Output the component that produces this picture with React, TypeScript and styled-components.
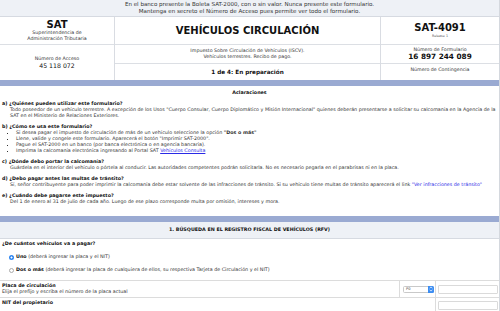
import styled, { createGlobalStyle } from 'styled-components';

const GlobalStyle = createGlobalStyle`
  html, body {
    margin: 0;
    padding: 0;
    background: #fff;
  }
  body {
    font-family: "DejaVu Sans", Verdana, sans-serif;
    color: #2b2b2b;
    width: 500px;
    height: 311px;
    overflow: hidden;
  }
`;

const Page = styled.div`
  width: 499px;
  min-height: 311px;
  border-right: 1px solid #d4d8de;
  font-size: 4.8px;
  line-height: 6px;
`;

const Notice = styled.div`
  height: 17px;
  padding-top: 1px;
  box-sizing: border-box;
  background: #eef1f6;
  border-bottom: 1px solid #d6dae1;
  text-align: center;
  font-size: 5.55px;
  line-height: 7px;
  color: #333;
`;

const Header = styled.div`
  display: grid;
  grid-template-columns: 115px 266px 1fr;
  height: 63px;
`;

const Column = styled.div<{ $last?: boolean }>`
  display: flex;
  flex-direction: column;
  border-right: ${(p) => (p.$last ? 'none' : '1px solid #d9dce2')};
`;

const TitleCell = styled.div`
  height: 28px;
  flex: none;
  box-sizing: border-box;
  border-bottom: 1px solid #dcdfe4;
  display: flex;
  flex-direction: column;
  align-items: center;
  justify-content: center;
  text-align: center;
`;

const InfoCell = styled.div<{ $grow?: boolean; $top?: boolean }>`
  height: ${(p) => (p.$grow ? 'auto' : '19px')};
  flex: ${(p) => (p.$grow ? '1' : 'none')};
  box-sizing: border-box;
  border-bottom: ${(p) => (p.$grow ? 'none' : '1px solid #dcdfe4')};
  display: flex;
  flex-direction: column;
  align-items: center;
  justify-content: ${(p) => (p.$top ? 'flex-start' : 'center')};
  padding-top: ${(p) => (p.$top ? '3px' : '0')};
  text-align: center;
`;

const BigTitle = styled.div<{ $size?: number }>`
  font-size: ${(p) => p.$size ?? 10}px;
  line-height: 11px;
  font-weight: bold;
  color: #111;
`;

const Tiny = styled.div`
  font-size: 4.75px;
  line-height: 6px;
  color: #333;
`;

const Release = styled.div`
  font-size: 3.3px;
  line-height: 6px;
  color: #555;
`;

const Digits = styled.div<{ $size: number; $bold?: boolean }>`
  font-size: ${(p) => p.$size}px;
  line-height: 8px;
  font-weight: ${(p) => (p.$bold ? 'bold' : 'normal')};
  color: #111;
`;

const Step = styled.div`
  font-size: 5.7px;
  font-weight: bold;
  color: #111;
`;

const BlueBar = styled.div`
  height: 6px;
  background: #9aaad2;
`;

const SubHeading = styled.div`
  height: 14px;
  display: flex;
  align-items: center;
  justify-content: center;
  font-weight: bold;
  color: #111;
`;

const Faq = styled.div`
  padding: 0 2px 11px;
`;

const FaqItem = styled.div`
  margin-top: 5px;
  &:first-child {
    margin-top: 1px;
  }
`;

const Question = styled.div`
  font-weight: bold;
  color: #111;
`;

const Answer = styled.div`
  padding-left: 8px;
  color: #333;
`;

const Bullets = styled.ul`
  margin: 0;
  padding-left: 14px;
  list-style: square;
  color: #333;
  li::marker {
    font-size: 4px;
  }
`;

const Link = styled.span<{ $underline?: boolean }>`
  color: #2a2ae6;
  text-decoration: ${(p) => (p.$underline ? 'underline' : 'none')};
`;

const SectionTitle = styled.div`
  height: 17px;
  box-sizing: border-box;
  background: #eef1f6;
  border-bottom: 1px solid #d6dae1;
  display: flex;
  align-items: center;
  justify-content: center;
  font-weight: bold;
  color: #111;
`;

const Choice = styled.div`
  padding: 2px 2px 7px;
  border-bottom: 1px solid #dcdcdc;
`;

const Option = styled.div`
  display: flex;
  align-items: center;
  gap: 2px;
  margin-top: 7px;
  padding-left: 7px;
  color: #333;
  b {
    color: #111;
  }
`;

const Radio = styled.span<{ $checked?: boolean }>`
  width: 5px;
  height: 5px;
  border-radius: 50%;
  box-sizing: border-box;
  flex: none;
  background: ${(p) => (p.$checked ? 'radial-gradient(circle, #fff 0 0.9px, #2f86f0 1.1px)' : '#fff')};
  border: ${(p) => (p.$checked ? 'none' : '0.6px solid #aaa')};
`;

const FieldRow = styled.div`
  display: flex;
  border-bottom: 1px solid #dcdcdc;
  min-height: 15px;
`;

const FieldLabel = styled.div`
  flex: 1;
  padding: 2px 2px;
`;

const Hint = styled.div`
  color: #333;
`;

const FieldCell = styled.div<{ $w: number; $end?: boolean }>`
  width: ${(p) => p.$w}px;
  flex: none;
  box-sizing: border-box;
  border-left: 1px solid #dcdcdc;
  display: flex;
  align-items: center;
  justify-content: ${(p) => (p.$end ? 'flex-end' : 'center')};
  padding-right: ${(p) => (p.$end ? '1px' : '0')};
`;

const FakeSelect = styled.div`
  width: 31px;
  height: 7px;
  box-sizing: border-box;
  border: 0.6px solid #c9c9c9;
  border-radius: 1.5px;
  display: flex;
  align-items: center;
  justify-content: space-between;
  font-size: 3.6px;
  color: #444;
  padding-left: 2px;
  background: #fff;
`;

const SelectArrows = styled.span`
  width: 6px;
  height: 7px;
  margin-right: -0.6px;
  border-radius: 0 1.5px 1.5px 0;
  background: #3c8df2;
  display: flex;
  align-items: center;
  justify-content: center;
`;

const TextInput = styled.input`
  width: 60px;
  height: 9px;
  box-sizing: border-box;
  border: 1px solid #dadada;
  border-radius: 1px;
  padding: 0;
  outline: none;
`;

type FaqEntry = { q: string; a?: React.ReactNode; list?: React.ReactNode[] };

const getFaqs = (): FaqEntry[] => [
  {
    q: 'a) ¿Quiénes pueden utilizar este formulario?',
    a: <>Todo poseedor de un vehículo terrestre. A excepción de los Usos "Cuerpo Consular, Cuerpo Diplomático y Misión Internacional" quienes deberán presentarse a solicitar su calcomanía en la Agencia de la SAT en el Ministerio de Relaciones Exteriores.</>,
  },
  {
    q: 'b) ¿Cómo se usa este formulario?',
    list: [
      <>Si desea pagar el impuesto de circulación de más de un vehículo seleccione la opción <b>"Dos o más"</b></>,
      <>Llene, valide y congele este formulario. Aparecerá el botón "Imprimir SAT-2000".</>,
      <>Pague el SAT-2000 en un banco (por banca electrónica o en agencia bancaria).</>,
      <>Imprima la calcomanía electrónica ingresando al Portal SAT <Link $underline>Vehículos Consulta</Link></>,
    ],
  },
  {
    q: 'c) ¿Dónde debo portar la calcomanía?',
    a: <>Guárdela en el interior del vehículo o pórtela al conducir. Las autoridades competentes podrán solicitarla. No es necesario pegarla en el parabrisas ni en la placa.</>,
  },
  {
    q: 'd) ¿Debo pagar antes las multas de tránsito?',
    a: <>Sí, señor contribuyente para poder imprimir la calcomanía debe estar solvente de las infracciones de tránsito. Si su vehículo tiene multas de tránsito aparecerá el link <Link>"Ver infracciones de tránsito"</Link></>,
  },
  {
    q: 'e) ¿Cuándo debe pagarse este impuesto?',
    a: <>Del 1 de enero al 31 de julio de cada año. Luego de ese plazo corresponde multa por omisión, intereses y mora.</>,
  },
];

export default function App() {
  const faqs = getFaqs();
  return (
    <Page>
      <GlobalStyle />
      <Notice>
        En el banco presente la Boleta SAT-2000, con o sin valor. Nunca presente este formulario.
        <br />
        Mantenga en secreto el Número de Acceso pues permite ver todo el formulario.
      </Notice>

      <Header>
        <Column>
          <TitleCell>
            <BigTitle>SAT</BigTitle>
            <Tiny>Superintendencia de<br />Administración Tributaria</Tiny>
          </TitleCell>
          <InfoCell $grow>
            <Tiny>Número de Acceso</Tiny>
            <Digits $size={6.2}>45 118 072</Digits>
          </InfoCell>
        </Column>
        <Column>
          <TitleCell>
            <BigTitle $size={10}>VEHÍCULOS CIRCULACIÓN</BigTitle>
          </TitleCell>
          <InfoCell>
            <Tiny>Impuesto Sobre Circulación de Vehículos (ISCV).<br />Vehículos terrestres. Recibo de pago.</Tiny>
          </InfoCell>
          <InfoCell $grow>
            <Step>1 de 4: En preparación</Step>
          </InfoCell>
        </Column>
        <Column $last>
          <TitleCell>
            <BigTitle>SAT-4091</BigTitle>
            <Release>Release 1</Release>
          </TitleCell>
          <InfoCell>
            <Tiny>Número de Formulario</Tiny>
            <Digits $size={7.3} $bold>16 897 244 089</Digits>
          </InfoCell>
          <InfoCell $grow $top>
            <Tiny>Número de Contingencia</Tiny>
          </InfoCell>
        </Column>
      </Header>

      <BlueBar />
      <SubHeading>Aclaraciones</SubHeading>

      <Faq>
        {faqs.map((f) => (
          <FaqItem key={f.q}>
            <Question>{f.q}</Question>
            {f.a && <Answer>{f.a}</Answer>}
            {f.list && (
              <Bullets>
                {f.list.map((li, i) => (
                  <li key={i}>{li}</li>
                ))}
              </Bullets>
            )}
          </FaqItem>
        ))}
      </Faq>

      <BlueBar />
      <SectionTitle>1. BÚSQUEDA EN EL REGISTRO FISCAL DE VEHÍCULOS (RFV)</SectionTitle>

      <Choice>
        <Question>¿De cuántos vehículos va a pagar?</Question>
        <Option>
          <Radio $checked />
          <span><b>Uno</b> (deberá ingresar la placa y el NIT)</span>
        </Option>
        <Option>
          <Radio />
          <span><b>Dos o más</b> (deberá ingresar la placa de cualquiera de ellos, su respectiva Tarjeta de Circulación y el NIT)</span>
        </Option>
      </Choice>

      <FieldRow>
        <FieldLabel>
          <Question>Placa de circulación</Question>
          <Hint>Elija el prefijo y escriba el número de la placa actual</Hint>
        </FieldLabel>
        <FieldCell $w={36} $end>
          <FakeSelect>
            <span>P0</span>
            <SelectArrows>
              <svg width="4" height="6" viewBox="0 0 4 6">
                <path d="M0.6 2.3 L2 0.9 L3.4 2.3 M0.6 3.7 L2 5.1 L3.4 3.7" stroke="#fff" strokeWidth="0.7" fill="none" />
              </svg>
            </SelectArrows>
          </FakeSelect>
        </FieldCell>
        <FieldCell $w={64}>
          <TextInput />
        </FieldCell>
      </FieldRow>
      <FieldRow>
        <FieldLabel>
          <Question>NIT del propietario</Question>
        </FieldLabel>
        <FieldCell $w={64}>
          <TextInput />
        </FieldCell>
      </FieldRow>
    </Page>
  );
}
